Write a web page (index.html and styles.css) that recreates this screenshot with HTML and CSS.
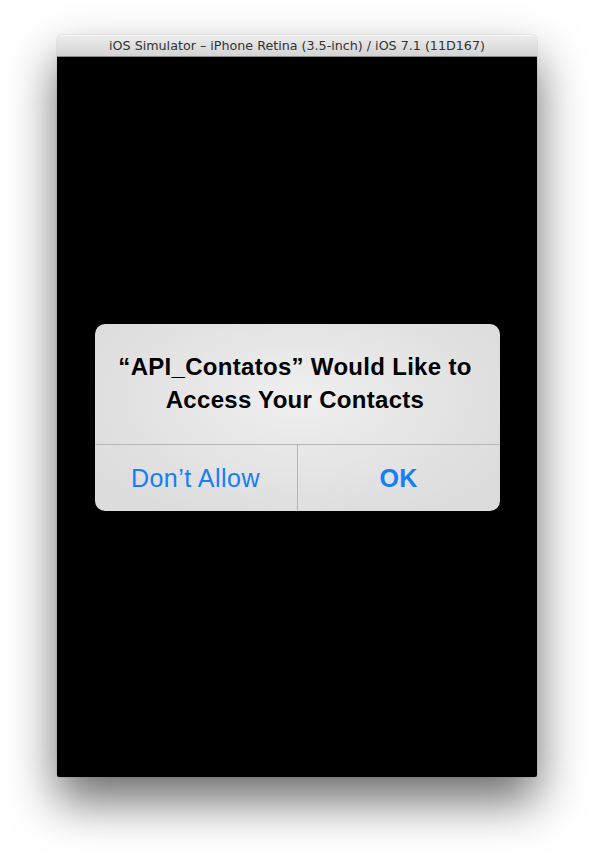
FILE: index.html
```html
<!DOCTYPE html>
<html>
<head>
<meta charset="utf-8">
<link rel="stylesheet" href="styles.css">
</head>
<body>
<div class="window">
  <div class="titlebar">iOS Simulator – iPhone Retina (3.5-inch) / iOS 7.1 (11D167)</div>
  <div class="screen">
    <div class="alert">
      <div class="alert-title">“API_Contatos” Would Like to Access Your Contacts</div>
      <div class="alert-buttons">
        <div class="btn">Don’t Allow</div>
        <div class="btn btn-bold">OK</div>
      </div>
    </div>
  </div>
</div>
</body>
</html>
```
FILE: styles.css
```css
html, body {
  margin: 0;
  padding: 0;
  background: #ffffff;
}
body {
  width: 594px;
  height: 856px;
  overflow: hidden;
}
.window {
  margin: 35px 0 0 57px;
  width: 480px;
  border-radius: 5px 5px 2px 2px;
  box-shadow: 0 24px 48px rgba(0, 0, 0, 0.58), 0 0 1px rgba(0, 0, 0, 0.5);
}
.titlebar {
  height: 22px;
  box-sizing: border-box;
  border-radius: 5px 5px 0 0;
  background: linear-gradient(#ececec, #d3d3d3);
  border-top: 1px solid #f6f6f6;
  border-bottom: 1px solid #8a8a8a;
  font-family: "DejaVu Sans", "Liberation Sans", sans-serif;
  font-size: 12.7px;
  color: #333333;
  text-align: center;
  line-height: 20px;
}
.screen {
  height: 720px;
  background: #000;
  display: flex;
  align-items: center;
  justify-content: center;
  border-radius: 0 0 2px 2px;
}
.alert {
  width: 405px;
  height: 187px;
  border-radius: 10px;
  background: radial-gradient(ellipse 60% 70% at 50% 40%, #efefef, #dcdcdc);
  display: flex;
  flex-direction: column;
  font-family: "Liberation Sans", Arial, sans-serif;
}
.alert-title {
  height: 121px;
  box-sizing: border-box;
  padding: 26px 16px 0 12px;
  text-align: center;
  font-weight: bold;
  font-size: 24px;
  letter-spacing: 0.3px;
  line-height: 33px;
  color: #000;
  border-bottom: 1px solid #b6b6b6;
}
.alert-buttons {
  flex: 1;
  display: flex;
}
.btn {
  flex: 1;
  display: flex;
  align-items: center;
  justify-content: center;
  color: #147efb;
  font-size: 25px;
  letter-spacing: 0.5px;
  padding-top: 2px;
}
.btn + .btn {
  border-left: 1px solid #b6b6b6;
}
.btn-bold {
  font-weight: bold;
  letter-spacing: 0.3px;
}
```
